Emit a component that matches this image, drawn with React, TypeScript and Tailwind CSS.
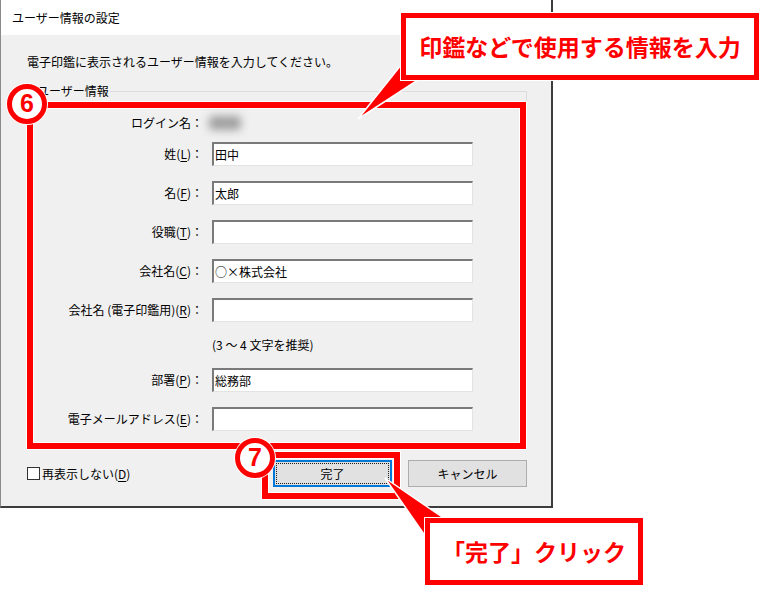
import React from "react";

type Field = {
  label: string;
  key: string;
  value: string;
};

const topFields: Field[] = [
  { label: "姓", key: "L", value: "田中" },
  { label: "名", key: "F", value: "太郎" },
  { label: "役職", key: "T", value: "" },
  { label: "会社名", key: "C", value: "○×株式会社" },
  { label: "会社名 (電子印鑑用)", key: "R", value: "" },
];

const bottomFields: Field[] = [
  { label: "部署", key: "P", value: "総務部" },
  { label: "電子メールアドレス", key: "E", value: "" },
];

function FieldRow({ field }: { field: Field }) {
  return (
    <div className="flex items-center h-[24px]">
      <label className="w-[175px] text-right leading-[16px] whitespace-nowrap">
        {field.label}(<span className="underline underline-offset-2">{field.key}</span>)：
      </label>
      <input
        readOnly
        value={field.value}
        className="
          ml-[9px]
          w-[261px]
          h-[24px]
          bg-white
          pl-[1px]
          border-solid
          border-t-2
          border-l-2
          border-r
          border-b
          border-t-[#7a7a7a]
          border-l-[#7a7a7a]
          border-r-[#e3e3e3]
          border-b-[#e3e3e3]
          outline-none
          text-[12px]
        "
      />
    </div>
  );
}

export default function App() {
  return (
    <div className="relative w-[764px] h-[590px] bg-white overflow-hidden font-['Noto_Sans_CJK_JP',sans-serif] text-[12px] text-black">

      {/* Dialog */}
      <div className="w-[553px] h-[508px] flex flex-col bg-[#f0f0f0] border-l border-l-[#8a8a8a] border-r-2 border-b-2 border-r-[#3c3c3c] border-b-[#3c3c3c]">

        {/* Title bar */}
        <div className="h-[35px] shrink-0 bg-white flex items-center pl-[11px] leading-[16px]">
          ユーザー情報の設定
        </div>

        <div className="flex flex-col pl-[26px] pr-[24px] pt-[19px]">

          <p className="leading-[16px]">
            電子印鑑に表示されるユーザー情報を入力してください。
          </p>

          {/* Group box */}
          <fieldset className="mt-[13px] h-[367px] border border-[#dcdcdc] pt-[16px] pb-[18px] min-w-0">
            <legend className="ml-[8px] px-[1px] leading-[16px]">ユーザー情報</legend>

            <div className="flex items-center h-[16px] leading-[16px]">
              <span className="w-[175px] text-right">ログイン名：</span>
              <span className="ml-[6px] w-[32px] h-[14px] rounded bg-[#9f9f9f] blur-[4px]" />
            </div>

            <div className="mt-[11px] flex flex-col gap-[15px]">
              {topFields.map((f) => (
                <FieldRow key={f.key} field={f} />
              ))}
            </div>

            <div className="mt-[15px] ml-[184px] leading-[16px]">(3 〜 4 文字を推奨)</div>

            <div className="mt-[15px] flex flex-col gap-[15px]">
              {bottomFields.map((f) => (
                <FieldRow key={f.key} field={f} />
              ))}
            </div>
          </fieldset>

          {/* Footer */}
          <footer className="mt-[10px] flex items-center">
            <span className="w-[13px] h-[13px] bg-white border border-[#333333]" />
            <span className="ml-[2px] leading-[16px]">
              再表示しない(<span className="underline underline-offset-2">D</span>)
            </span>

            <div className="ml-auto flex gap-[16px]">
              <button
                type="button"
                className="w-[119px] h-[27px] bg-[#e1e1e1] border-2 border-[#0078d7] p-[1px]"
              >
                <span className="flex h-full items-center justify-center border border-dotted border-[#1a1a1a]">
                  完了
                </span>
              </button>
              <button
                type="button"
                className="w-[119px] h-[27px] bg-[#e1e1e1] border border-[#adadad] flex items-center justify-center"
              >
                キャンセル
              </button>
            </div>
          </footer>
        </div>
      </div>

      {/* ================================
          ANNOTATIONS
         ================================ */}
      <div className="absolute left-[27px] top-[102px] w-[499px] h-[347px] border-[6px] border-[#ff0000] shadow-[0_0_0_1px_#ffffff,inset_0_0_0_1px_#ffffff]" />
      <div className="absolute left-[262px] top-[452px] w-[138px] h-[47px] border-[6px] border-[#ff0000] shadow-[0_0_0_1px_#ffffff,inset_0_0_0_1px_#ffffff]" />

      <div className="absolute left-[7px] top-[84px] w-[40px] h-[40px] rounded-full bg-white border-[5px] border-[#ff0000] shadow-[0_0_0_1px_#ffffff] flex items-center justify-center text-[#ff0000] font-bold text-[25px] font-['Liberation_Sans',sans-serif]">
        6
      </div>
      <div className="absolute left-[235px] top-[438px] w-[40px] h-[40px] rounded-full bg-white border-[5px] border-[#ff0000] shadow-[0_0_0_1px_#ffffff] flex items-center justify-center text-[#ff0000] font-bold text-[25px] font-['Liberation_Sans',sans-serif]">
        7
      </div>

      {/* Callout tails */}
      <svg className="absolute left-0 top-0 pointer-events-none" width="764" height="590">
        <polygon points="358,119 405,60 421,78" fill="#ff0000" stroke="#ffffff" strokeWidth="1.5" strokeLinejoin="miter" />
        <polygon points="385,478 428,540 448,521" fill="#ff0000" stroke="#ffffff" strokeWidth="1.5" />
      </svg>

      <div className="absolute left-[401px] top-[13px] w-[358px] h-[67px] bg-white border-[5px] border-[#ff0000] shadow-[0_0_0_1px_#ffffff] flex items-center justify-center text-[23px] font-bold text-[#ff0000] leading-none whitespace-nowrap">
        印鑑などで使用する情報を入力
      </div>
      <div className="absolute left-[425px] top-[518px] w-[218px] h-[67px] bg-white border-[5px] border-[#ff0000] shadow-[0_0_0_1px_#ffffff] flex items-center justify-center text-[23px] font-bold text-[#ff0000] leading-none whitespace-nowrap">
        「完了」クリック
      </div>
    </div>
  );
}
